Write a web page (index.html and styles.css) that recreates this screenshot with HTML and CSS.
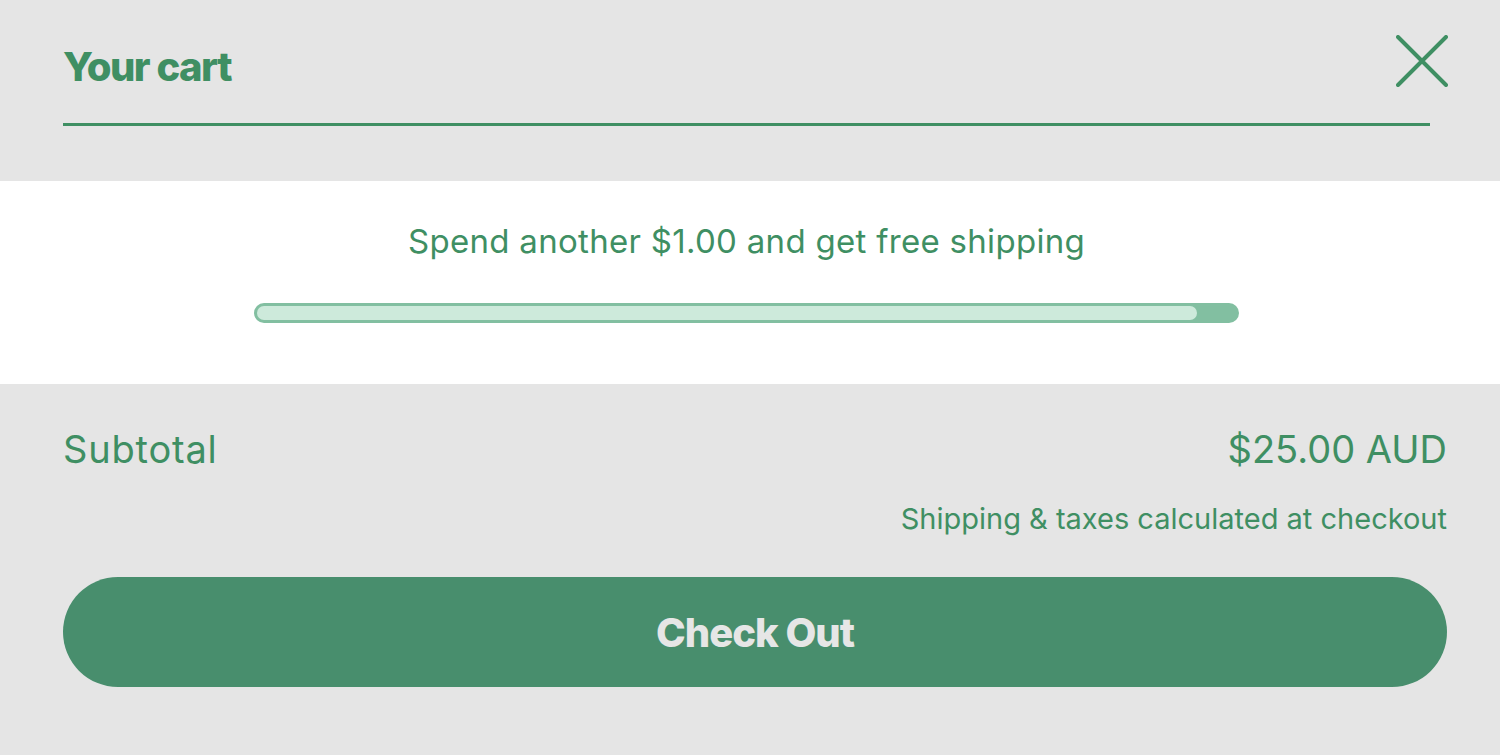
FILE: index.html
```html
<!DOCTYPE html>
<html lang="en">
<head>
    <meta charset="UTF-8">
    <meta name="viewport" content="width=device-width, initial-scale=1.0">
    <title>Your cart</title>
    <link rel="stylesheet" href="styles.css">
</head>
<body>
    <div class="cart">
        <div class="cart-header">
            <h1 class="cart-title">Your cart</h1>
            <button class="close-btn" aria-label="Close">
                <svg width="52" height="52" viewBox="0 0 52 52">
                    <path d="M2 2 L50 50 M50 2 L2 50" stroke="#3f8f63" stroke-width="4" stroke-linecap="round" fill="none"/>
                </svg>
            </button>
        </div>
        <hr class="divider">

        <div class="shipping">
            <p class="shipping-text">Spend another $1.00 and get free shipping</p>
            <div class="progress">
                <div class="progress-fill" style="width: 96%"></div>
            </div>
        </div>

        <div class="summary">
            <div class="subtotal">
                <span>Subtotal</span>
                <span>$25.00 AUD</span>
            </div>
            <p class="note">Shipping &amp; taxes calculated at checkout</p>
            <button class="checkout">Check Out</button>
        </div>
    </div>
</body>
</html>
```

FILE: styles.css
```css
body {
    margin: 0;
    background: #e5e5e5;
    font-family: Inter, "Noto Sans", sans-serif;
    color: #3f8f63;
}
.cart {
    padding-top: 20px;
}
.cart-header {
    display: flex;
    justify-content: space-between;
    align-items: flex-start;
    margin: 0 53px 0 63px;
    height: 84px;
}
.cart-title {
    margin: 0;
    padding-top: 24px;
    font-size: 40px;
    font-weight: 800;
    letter-spacing: -1.5px;
    line-height: 46px;
}
.close-btn {
    background: none;
    border: none;
    padding: 0;
    margin-top: 15px;
    margin-right: -1px;
    cursor: pointer;
}
.divider {
    margin: 19px 70px 0 63px;
    border: none;
    border-top: 3px solid #3f8f63;
}
.shipping {
    background: #fff;
    margin-top: 55px;
    height: 203px;
    padding: 1px 7px 0 0;
    box-sizing: border-box;
    text-align: center;
}
.shipping-text {
    margin: 39px 0 0;
    font-size: 33px;
    line-height: 40px;
    letter-spacing: 0.3px;
}
.progress {
    width: 985px;
    height: 20px;
    margin: 42px auto 0;
    padding: 3px;
    box-sizing: border-box;
    background: #82bfa1;
    border-radius: 10px;
}
.progress-fill {
    height: 100%;
    background: #cdeadb;
    border-radius: 7px;
}
.summary {
    margin: 0 53px 0 63px;
}
.subtotal {
    display: flex;
    justify-content: space-between;
    margin-top: 42px;
    font-size: 38px;
    line-height: 46px;
}
.subtotal span:first-child {
    letter-spacing: 0.8px;
}
.note {
    margin: 30px 0 0;
    text-align: right;
    font-size: 29px;
    line-height: 34px;
}
.checkout {
    display: block;
    width: 100%;
    height: 110px;
    margin-top: 41px;
    border: none;
    border-radius: 55px;
    background: #488e6d;
    color: #e6e6e6;
    font-family: Inter, "Noto Sans", sans-serif;
    font-size: 40px;
    font-weight: 800;
    letter-spacing: -1px;
    cursor: pointer;
}
```
